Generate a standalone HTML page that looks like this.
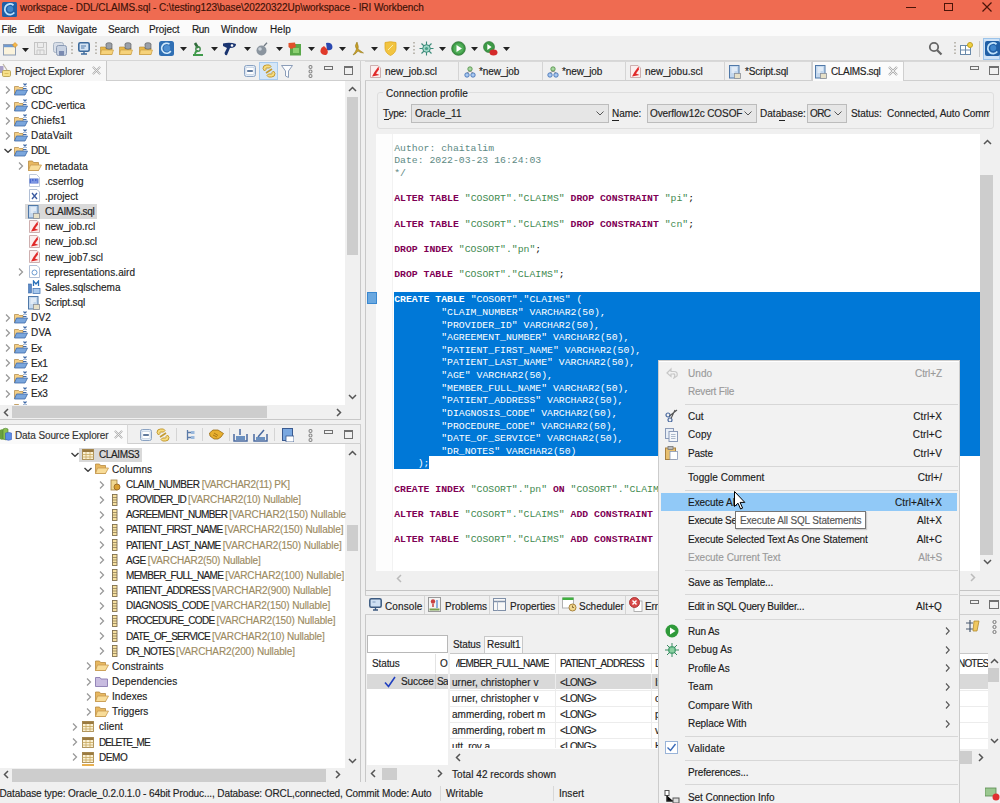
<!DOCTYPE html><html><head><meta charset="utf-8"><style>
*{margin:0;padding:0;box-sizing:border-box}
html,body{width:1000px;height:803px;overflow:hidden;background:#f0f0f0;position:relative;font-family:"Liberation Sans",sans-serif}
div,span,svg{position:absolute}
.t{font-size:10px;line-height:14px;color:#1a1a1a;white-space:pre;-webkit-text-stroke:0.15px currentColor}
.m{font-family:"Liberation Mono",monospace;font-size:9.8px;line-height:12px;white-space:pre;color:#000}
.g{color:#9a9a9a}
</style></head><body><div style="left:0px;top:0px;width:1000px;height:20px;background:#ef6b51"></div>
<svg style="left:2px;top:2px" width="15" height="15" viewBox="0 0 15 15"><rect x="0" y="0" width="15" height="15" rx="1.5" fill="#1f5fa6"/><path d="M11.5 3.2A5.3 5.3 0 1 0 12.3 10.5" fill="none" stroke="#bfe2fb" stroke-width="1.8"/><circle cx="8.2" cy="7" r="3" fill="#3f86cc"/></svg>
<span class="t" style="left:20px;top:0.50px;letter-spacing:-0.076px;color:#3b1208">workspace - DDL/CLAIMS.sql - C:\testing123\base\20220322Up\workspace - IRI Workbench</span>
<div style="left:906px;top:7px;width:10px;height:1px;background:#4a1408"></div>
<div style="left:944px;top:3px;width:9px;height:8px;border:1.3px solid #4a1408"></div>
<svg style="left:982px;top:2px" width="10" height="10" viewBox="0 0 10 10"><path d="M0.5 0.5L9.5 9.5M9.5 0.5L0.5 9.5" stroke="#4a1408" stroke-width="1.2"/></svg>
<div style="left:0px;top:20px;width:1000px;height:16px;background:#fbfbfb"></div>
<span class="t" style="left:1.5px;top:22.50px;letter-spacing:-0.232px;">File</span>
<span class="t" style="left:28px;top:22.50px;letter-spacing:-0.256px;">Edit</span>
<span class="t" style="left:57px;top:22.50px;letter-spacing:0.096px;">Navigate</span>
<span class="t" style="left:108px;top:22.50px;letter-spacing:-0.103px;">Search</span>
<span class="t" style="left:149px;top:22.50px;letter-spacing:-0.091px;">Project</span>
<span class="t" style="left:192px;top:22.50px;letter-spacing:-0.373px;">Run</span>
<span class="t" style="left:221px;top:22.50px;letter-spacing:0.092px;">Window</span>
<span class="t" style="left:270px;top:22.50px;letter-spacing:0.059px;">Help</span>
<div style="left:0px;top:36px;width:1000px;height:25px;background:#f0f0f0"></div>
<div style="left:0px;top:60px;width:1000px;height:1px;background:#d6d6d6"></div>
<svg style="left:3px;top:42px" width="15" height="14" viewBox="0 0 15 14"><rect x="0.5" y="2.5" width="12" height="10.5" fill="#fbf3dc" stroke="#8c9cb4"/><rect x="1" y="3" width="11" height="2.2" fill="#6f9ad0"/><path d="M12 0.5L14.5 3L12 5.5L9.5 3Z" fill="#f6b84a" stroke="#d08a20" stroke-width="0.6"/></svg>
<svg style="left:22px;top:47.5px" width="7" height="4"><path d="M0 0H7L3.5 4Z" fill="#222"/></svg>
<svg style="left:34px;top:42px" width="13" height="13" viewBox="0 0 13 13"><rect x="0.5" y="0.5" width="12" height="12" fill="#ececec" stroke="#c4c4c4"/><path d="M3.5 0.5V5.5H9.5V0.5M3 12.5V8H10V12.5M6 8V12.5" fill="none" stroke="#c8c8c8"/></svg>
<svg style="left:53px;top:42px" width="14" height="14" viewBox="0 0 14 14"><rect x="0.5" y="0.5" width="10" height="10" rx="2" fill="#d8dee8" stroke="#a8b4c4"/><rect x="3.5" y="3.5" width="10" height="10" rx="2" fill="#c8d2e2" stroke="#8a9ab4"/><rect x="6" y="9" width="5" height="4" fill="#7a8ab0"/></svg>
<svg style="left:71px;top:42px" width="2" height="14"><path d="M1 0V14" stroke="#9a9488" stroke-dasharray="1.5 2" stroke-width="1.2"/></svg>
<svg style="left:78px;top:42px" width="12" height="13" viewBox="0 0 12 13"><rect x="0.8" y="0.8" width="10.4" height="8.4" rx="1.5" fill="#d4e4f4" stroke="#3c6a9c" stroke-width="1.6"/><path d="M3 4H8M3 6H6.5" stroke="#3c6a9c" stroke-width="0.9"/><path d="M3 12H9M6 9.5V12" stroke="#3c6a9c" stroke-width="1.4"/></svg>
<svg style="left:95px;top:42px" width="2" height="14"><path d="M1 0V14" stroke="#9a9488" stroke-dasharray="1.5 2" stroke-width="1.2"/></svg>
<svg style="left:100px;top:42px" width="14" height="13" viewBox="0 0 14 13"><path d="M0.5 5H5L6 6H12V12.5H0.5Z" fill="#e8b84a" stroke="#b88a30" stroke-width="0.6"/><path d="M1.5 8H13.5L12 12.5H0.5Z" fill="#f6d27a" stroke="#c89a40" stroke-width="0.6"/><ellipse cx="9" cy="2" rx="3" ry="1.3" fill="#9aa0a8" stroke="#555" stroke-width="0.6"/><path d="M6 2V6.5Q9 8 12 6.5V2" fill="#9aa0a8" stroke="#555" stroke-width="0.6"/></svg>
<svg style="left:119px;top:42px" width="14" height="13" viewBox="0 0 14 13"><path d="M0.5 5H5L6 6H12V12.5H0.5Z" fill="#e8b84a" stroke="#b88a30" stroke-width="0.6"/><path d="M1.5 8H13.5L12 12.5H0.5Z" fill="#f6d27a" stroke="#c89a40" stroke-width="0.6"/><ellipse cx="9" cy="2" rx="3" ry="1.3" fill="#9aa0a8" stroke="#555" stroke-width="0.6"/><path d="M6 2V6.5Q9 8 12 6.5V2" fill="#9aa0a8" stroke="#555" stroke-width="0.6"/></svg>
<svg style="left:139px;top:42px" width="14" height="13" viewBox="0 0 14 13"><path d="M0.5 5H5L6 6H12V12.5H0.5Z" fill="#e8b84a" stroke="#b88a30" stroke-width="0.6"/><path d="M1.5 8H13.5L12 12.5H0.5Z" fill="#f6d27a" stroke="#c89a40" stroke-width="0.6"/><ellipse cx="9" cy="2" rx="3" ry="1.3" fill="#9aa0a8" stroke="#555" stroke-width="0.6"/><path d="M6 2V6.5Q9 8 12 6.5V2" fill="#9aa0a8" stroke="#555" stroke-width="0.6"/></svg>
<svg style="left:159px;top:41px" width="15" height="15" viewBox="0 0 15 15"><rect x="0" y="0" width="15" height="15" rx="2.5" fill="#2f6fb4"/><path d="M10.5 3.2A5 5 0 1 0 11.8 10" fill="none" stroke="#cfe8fb" stroke-width="1.6"/><circle cx="8" cy="7.2" r="3.2" fill="#4f8fd0"/></svg>
<svg style="left:180px;top:47px" width="7" height="4"><path d="M0 0H7L3.5 4Z" fill="#222"/></svg>
<svg style="left:192px;top:42px" width="12" height="14" viewBox="0 0 12 14"><path d="M3 1L6 6" stroke="#2f6a3a" stroke-width="2.6"/><circle cx="6" cy="7" r="2.2" fill="none" stroke="#3f8a4a" stroke-width="1.4"/><path d="M1 13H11M3 13Q3 9 6 9" fill="none" stroke="#3f9a4a" stroke-width="1.8"/></svg>
<svg style="left:211px;top:47px" width="7" height="4"><path d="M0 0H7L3.5 4Z" fill="#222"/></svg>
<svg style="left:222px;top:42px" width="15" height="14" viewBox="0 0 15 14"><path d="M1 1.5Q8 0 14 2Q14 6 8 6L5 13Q3 14 2.5 11L5 6L1 4Z" fill="#1a3470"/><circle cx="10" cy="3.5" r="1.3" fill="#fff"/></svg>
<svg style="left:243.5px;top:47px" width="7" height="4"><path d="M0 0H7L3.5 4Z" fill="#222"/></svg>
<svg style="left:256px;top:42px" width="13" height="14" viewBox="0 0 13 14"><circle cx="5.5" cy="8.5" r="5" fill="#8a949e"/><circle cx="4" cy="7" r="1.8" fill="#c8d0d8"/><path d="M8 4L11 0.8" stroke="#707a84" stroke-width="1.3"/></svg>
<svg style="left:275.5px;top:47px" width="7" height="4"><path d="M0 0H7L3.5 4Z" fill="#222"/></svg>
<svg style="left:288px;top:42px" width="14" height="14" viewBox="0 0 14 14"><rect x="2" y="2" width="11" height="11.5" fill="#5aa84a"/><rect x="5" y="6" width="6" height="5" fill="#8ad070"/><path d="M0.5 1L7 0.5L8 5L3 7L0.5 5Z" fill="#e0502a"/></svg>
<svg style="left:307.8px;top:47px" width="7" height="4"><path d="M0 0H7L3.5 4Z" fill="#222"/></svg>
<svg style="left:319px;top:42px" width="14" height="14" viewBox="0 0 14 14"><path d="M7 1Q13 0 13.5 5Q13 9 8 8Z" fill="#2a48b0"/><path d="M5 4Q1 6 1.5 10Q3 13.5 7 13Q10 11 8 7Z" fill="#e03a2a"/></svg>
<svg style="left:338.5px;top:47px" width="7" height="4"><path d="M0 0H7L3.5 4Z" fill="#222"/></svg>
<svg style="left:351px;top:41px" width="14" height="15" viewBox="0 0 14 15"><path d="M6 1Q8 6 7 8L12.5 12Q9 12 7 10Q5 13 2 14Q5 10 5.5 8Q3 5 6 1Z" fill="#c8a028" stroke="#8a7010" stroke-width="0.5"/></svg>
<svg style="left:371px;top:47px" width="7" height="4"><path d="M0 0H7L3.5 4Z" fill="#222"/></svg>
<svg style="left:384px;top:41px" width="13" height="15" viewBox="0 0 13 15"><path d="M1 1.5Q6.5 0 12 1.5V7Q12 12 6.5 14.5Q1 12 1 7Z" fill="#f2c440" stroke="#e0a820" stroke-width="0.8"/><path d="M4 9L9 4" stroke="#faf0b0" stroke-width="1"/></svg>
<svg style="left:403px;top:47px" width="7" height="4"><path d="M0 0H7L3.5 4Z" fill="#222"/></svg>
<svg style="left:413px;top:42px" width="2" height="14"><path d="M1 0V14" stroke="#9a9488" stroke-dasharray="1.5 2" stroke-width="1.2"/></svg>
<svg style="left:419px;top:41px" width="15" height="15" viewBox="0 0 15 15"><path d="M7.5 0.5V14.5M0.5 7.5H14.5M2.5 2.5L12.5 12.5M12.5 2.5L2.5 12.5" stroke="#3a8a78" stroke-width="1.1"/><circle cx="7.5" cy="7.5" r="3.8" fill="#a0d8c8" stroke="#3a8a78" stroke-width="1"/><circle cx="7.5" cy="7.5" r="1.6" fill="#4aa088"/></svg>
<svg style="left:439px;top:47px" width="7" height="4"><path d="M0 0H7L3.5 4Z" fill="#222"/></svg>
<svg style="left:451px;top:41px" width="15" height="15" viewBox="0 0 15 15"><circle cx="7.5" cy="7.5" r="6.8" fill="#3d9a46" stroke="#2a7030" stroke-width="0.8"/><circle cx="7.5" cy="7.5" r="5" fill="#52b05a"/><path d="M5.5 4L11 7.5L5.5 11Z" fill="#fff"/></svg>
<svg style="left:470.5px;top:47px" width="7" height="4"><path d="M0 0H7L3.5 4Z" fill="#222"/></svg>
<svg style="left:483px;top:41px" width="15" height="15" viewBox="0 0 15 15"><circle cx="6" cy="6" r="5.5" fill="#3d9a46" stroke="#2a7030" stroke-width="0.6"/><path d="M4.3 3L8.6 6L4.3 9Z" fill="#fff"/><ellipse cx="10.5" cy="11.5" rx="4" ry="3" fill="#d42a2a"/></svg>
<svg style="left:503px;top:47px" width="7" height="4"><path d="M0 0H7L3.5 4Z" fill="#222"/></svg>
<svg style="left:928px;top:41px" width="15" height="15" viewBox="0 0 15 15"><circle cx="6" cy="6" r="4.2" fill="none" stroke="#666" stroke-width="1.8"/><path d="M9 9L13.5 13.5" stroke="#666" stroke-width="2.2"/></svg>
<svg style="left:954px;top:42px" width="2" height="14"><path d="M1 0V14" stroke="#9a9488" stroke-dasharray="1.5 2" stroke-width="1.2"/></svg>
<svg style="left:960px;top:42px" width="13" height="13" viewBox="0 0 13 13"><rect x="0.5" y="3.5" width="10" height="9" fill="#fff" stroke="#6a8aaa"/><path d="M0.5 8H10.5M5.5 3.5V12.5" stroke="#6a8aaa"/><circle cx="10" cy="3" r="2.5" fill="#f0d040" stroke="#c0a020"/></svg>
<div style="left:979px;top:41px;width:1px;height:16px;background:#c8c8c8"></div>
<div style="left:983px;top:38px;width:17px;height:22px;background:#cfe3f7;border:1px solid #9cc4ea"></div>
<svg style="left:985px;top:41px" width="15" height="15" viewBox="0 0 15 15"><rect x="0" y="0" width="15" height="15" rx="2" fill="#1f5fa6"/><path d="M11.5 3.2A5.3 5.3 0 1 0 12.3 10.5" fill="none" stroke="#bfe2fb" stroke-width="1.8"/><circle cx="8.2" cy="7" r="3" fill="#3f86cc"/></svg>
<div style="left:0px;top:61px;width:361px;height:20px;background:#f0f0f0;border-bottom:1px solid #cfcfcf;border-right:1px solid #cfcfcf"></div>
<div style="left:0px;top:61px;width:107px;height:20px;background:#f7f7f7;border-right:1px solid #c8c8c8"></div>
<svg style="left:0px;top:63px" width="13" height="15" viewBox="0 0 13 15"><rect x="0" y="3" width="3.5" height="7" fill="#a8a0c8"/><path d="M3 1L7 7" stroke="#b8b0a0" stroke-width="1.2"/><rect x="2.5" y="7.5" width="8" height="6" rx="1.2" fill="#f6e08a" stroke="#b8a050" stroke-width="0.9"/><path d="M4.5 10.5H8.5" stroke="#d8b850" stroke-width="0.8"/></svg>
<span class="t" style="left:15px;top:64.80px;letter-spacing:-0.108px;color:#333">Project Explorer</span>
<svg style="left:92px;top:66px" width="9" height="9" viewBox="0 0 10 10"><path d="M1 1L9 9M9 1L1 9" stroke="#aaa" stroke-width="2.2"/><path d="M1 1L9 9M9 1L1 9" stroke="#fafafa" stroke-width="0.8"/></svg>
<svg style="left:244px;top:65px" width="12" height="12" viewBox="0 0 12 12"><rect x="0.5" y="0.5" width="11" height="11" rx="2" fill="#e4edf7" stroke="#8aa2c2"/><rect x="2" y="2.5" width="8" height="7" fill="#fff" stroke="#b8c8dc" stroke-width="0.6"/><path d="M3.2 6H8.8" stroke="#3a5a86" stroke-width="1.6"/></svg>
<div style="left:259px;top:62px;width:19px;height:18px;background:#d4e6f8;border:1px solid #a8cbee"></div>
<svg style="left:262px;top:64px" width="14" height="14" viewBox="0 0 14 14"><path d="M1 4.5Q1 1 4.5 1H7.5L9 2.5L7.5 4H4.5Q4 4 4 4.5V5.5L2.5 7Z" fill="#f6dc80" stroke="#c49a30" stroke-width="1"/><path d="M13 9.5Q13 13 9.5 13H6.5L5 11.5L6.5 10H9.5Q10 10 10 9.5V8.5L11.5 7Z" fill="#f6dc80" stroke="#c49a30" stroke-width="1"/><path d="M4 9L10 5" stroke="#c49a30" stroke-width="1.6"/></svg>
<svg style="left:281px;top:65px" width="12" height="13" viewBox="0 0 12 13"><path d="M0.5 0.5H11.5L7.5 6V12.5L4.5 11V6Z" fill="#fbfcfe" stroke="#8a9cb8" stroke-linejoin="round"/></svg>
<svg style="left:308px;top:64.5px" width="5" height="13" viewBox="0 0 5 13"><circle cx="2.5" cy="2" r="1.5" fill="none" stroke="#888" stroke-width="1.1"/><circle cx="2.5" cy="6.5" r="1.5" fill="none" stroke="#888" stroke-width="1.1"/><circle cx="2.5" cy="11" r="1.5" fill="none" stroke="#888" stroke-width="1.1"/></svg>
<div style="left:324px;top:65.5px;width:9px;height:4px;border:1px solid #707070"></div>
<div style="left:343.5px;top:65.5px;width:9.5px;height:9px;border:1px solid #707070;border-top:2px solid #707070"></div>
<div style="left:0px;top:81px;width:361px;height:339px;background:#fff;border-right:1px solid #c8c8c8;border-bottom:1px solid #c8c8c8"></div>
<div style="left:345px;top:81px;width:15px;height:324px;background:#f0f0f0"></div>
<svg style="left:348px;top:86px" width="9" height="6"><path d="M1 5L4.5 1.5L8 5" fill="none" stroke="#555" stroke-width="1.5"/></svg>
<div style="left:347px;top:97px;width:11px;height:158px;background:#cdcdcd"></div>
<svg style="left:348px;top:394px" width="9" height="6"><path d="M1 1L4.5 4.5L8 1" fill="none" stroke="#555" stroke-width="1.5"/></svg>
<div style="left:0px;top:405px;width:345px;height:14px;background:#f0f0f0"></div>
<div style="left:12px;top:405.5px;width:255px;height:12.5px;background:#cdcdcd"></div>
<svg style="left:3px;top:408px" width="6" height="9"><path d="M5 1L1.5 4.5L5 8" fill="none" stroke="#555" stroke-width="1.5"/></svg>
<svg style="left:336px;top:408px" width="6" height="9"><path d="M1 1L4.5 4.5L1 8" fill="none" stroke="#555" stroke-width="1.5"/></svg>
<div style="left:345px;top:405px;width:15px;height:14px;background:#f0f0f0"></div>
<svg style="left:5px;top:86.3px" width="6" height="8"><path d="M1 0.5L4.5 4L1 7.5" fill="none" stroke="#9a9a9a" stroke-width="1.3"/></svg>
<svg style="left:14px;top:83.3px" width="14" height="13" viewBox="0 0 14 13"><path d="M0.5 3.5H4.5L5.5 4.5H9V11.5H0.5Z" fill="#f4cf86" stroke="#b89050" stroke-width="0.8"/><path d="M2.5 7H13.5L11 12H0.5Z" fill="#7aa6dc" stroke="#3f6aa8" stroke-width="0.8"/><path d="M9.5 0.5L12.5 3.5M12.5 0.5L9.5 3.5" stroke="#3f6aa8" stroke-width="1.2"/><path d="M9 5.5H12.5" stroke="#3f6aa8" stroke-width="1"/></svg>
<span class="t" style="left:31px;top:83.80px;letter-spacing:-0.137px;color:#222">CDC</span>
<svg style="left:5px;top:101.5px" width="6" height="8"><path d="M1 0.5L4.5 4L1 7.5" fill="none" stroke="#9a9a9a" stroke-width="1.3"/></svg>
<svg style="left:14px;top:98.5px" width="14" height="13" viewBox="0 0 14 13"><path d="M0.5 3.5H4.5L5.5 4.5H9V11.5H0.5Z" fill="#f4cf86" stroke="#b89050" stroke-width="0.8"/><path d="M2.5 7H13.5L11 12H0.5Z" fill="#7aa6dc" stroke="#3f6aa8" stroke-width="0.8"/><path d="M9.5 0.5L12.5 3.5M12.5 0.5L9.5 3.5" stroke="#3f6aa8" stroke-width="1.2"/><path d="M9 5.5H12.5" stroke="#3f6aa8" stroke-width="1"/></svg>
<span class="t" style="left:31px;top:98.96px;letter-spacing:-0.030px;color:#222">CDC-vertica</span>
<svg style="left:5px;top:116.6px" width="6" height="8"><path d="M1 0.5L4.5 4L1 7.5" fill="none" stroke="#9a9a9a" stroke-width="1.3"/></svg>
<svg style="left:14px;top:113.6px" width="14" height="13" viewBox="0 0 14 13"><path d="M0.5 3.5H4.5L5.5 4.5H9V11.5H0.5Z" fill="#f4cf86" stroke="#b89050" stroke-width="0.8"/><path d="M2.5 7H13.5L11 12H0.5Z" fill="#7aa6dc" stroke="#3f6aa8" stroke-width="0.8"/><path d="M9.5 0.5L12.5 3.5M12.5 0.5L9.5 3.5" stroke="#3f6aa8" stroke-width="1.2"/><path d="M9 5.5H12.5" stroke="#3f6aa8" stroke-width="1"/></svg>
<span class="t" style="left:31px;top:114.12px;letter-spacing:0.145px;color:#222">Chiefs1</span>
<svg style="left:5px;top:131.8px" width="6" height="8"><path d="M1 0.5L4.5 4L1 7.5" fill="none" stroke="#9a9a9a" stroke-width="1.3"/></svg>
<svg style="left:14px;top:128.8px" width="14" height="13" viewBox="0 0 14 13"><path d="M0.5 3.5H4.5L5.5 4.5H9V11.5H0.5Z" fill="#f4cf86" stroke="#b89050" stroke-width="0.8"/><path d="M2.5 7H13.5L11 12H0.5Z" fill="#7aa6dc" stroke="#3f6aa8" stroke-width="0.8"/><path d="M9.5 0.5L12.5 3.5M12.5 0.5L9.5 3.5" stroke="#3f6aa8" stroke-width="1.2"/><path d="M9 5.5H12.5" stroke="#3f6aa8" stroke-width="1"/></svg>
<span class="t" style="left:31px;top:129.28px;letter-spacing:0.155px;color:#222">DataVailt</span>
<svg style="left:4px;top:148.4px" width="8" height="5"><path d="M0.5 1L4 4.3L7.5 1" fill="none" stroke="#404040" stroke-width="1.4"/></svg>
<svg style="left:14px;top:143.9px" width="14" height="13" viewBox="0 0 14 13"><path d="M0.5 3.5H4.5L5.5 4.5H9V11.5H0.5Z" fill="#f4cf86" stroke="#b89050" stroke-width="0.8"/><path d="M2.5 7H13.5L11 12H0.5Z" fill="#7aa6dc" stroke="#3f6aa8" stroke-width="0.8"/><path d="M9.5 0.5L12.5 3.5M12.5 0.5L9.5 3.5" stroke="#3f6aa8" stroke-width="1.2"/><path d="M9 5.5H12.5" stroke="#3f6aa8" stroke-width="1"/></svg>
<span class="t" style="left:31px;top:144.44px;letter-spacing:-0.458px;color:#222">DDL</span>
<svg style="left:18px;top:162.1px" width="6" height="8"><path d="M1 0.5L4.5 4L1 7.5" fill="none" stroke="#9a9a9a" stroke-width="1.3"/></svg>
<svg style="left:28px;top:160.1px" width="14" height="11" viewBox="0 0 14 11"><path d="M0.5 1H4.5L5.5 2.5H10.5V10.5H0.5Z" fill="#e8b860" stroke="#b88a40" stroke-width="0.8"/><path d="M2.5 5H13.5L10.5 10.5H0.5Z" fill="#f8dc98" stroke="#c89a50" stroke-width="0.8"/></svg>
<span class="t" style="left:45px;top:159.60px;letter-spacing:0.146px;color:#222">metadata</span>
<svg style="left:29px;top:174.3px" width="11" height="13" viewBox="0 0 11 13"><path d="M0.5 0.5H7.5L10.5 3.5V12.5H0.5Z" fill="#fff" stroke="#b8c4d8" stroke-width="0.9"/><rect x="0.5" y="4.5" width="9" height="5" fill="#4a6ad0"/><path d="M2 6H3M4.5 6H6M7.5 6H8.5M2 8H8.5" stroke="#c8d8ff" stroke-width="0.8"/></svg>
<span class="t" style="left:45px;top:174.76px;letter-spacing:0.041px;color:#222">.cserrlog</span>
<svg style="left:29px;top:189.4px" width="11" height="13" viewBox="0 0 11 13"><path d="M0.5 0.5H8L10.5 3V12.5H0.5Z" fill="#fff" stroke="#a8b8d0" stroke-width="0.9"/><path d="M3 4L8 10M8 4L3 10" stroke="#3a5aa0" stroke-width="1.3"/></svg>
<span class="t" style="left:45px;top:189.92px;letter-spacing:0.027px;color:#222">.project</span>
<div style="left:25px;top:204.07999999999998px;width:72px;height:15px;background:#d9d9d9"></div>
<svg style="left:28px;top:204.6px" width="12" height="14" viewBox="0 0 12 14"><rect x="0.5" y="0.5" width="9.5" height="12.5" fill="#c4d8ee" stroke="#4f78a8" stroke-width="1"/><path d="M2.5 3H8M2.5 5H8M2.5 7H5.5" stroke="#ffffff" stroke-width="1"/><rect x="5.5" y="8.5" width="6" height="5" fill="#e6e0c8" stroke="#8a9098" stroke-width="0.8"/></svg>
<span class="t" style="left:45px;top:205.08px;letter-spacing:-0.349px;color:#222">CLAIMS.sql</span>
<svg style="left:29px;top:219.7px" width="11" height="13" viewBox="0 0 11 13"><path d="M0.5 0.5H8L10.5 3V12.5H0.5Z" fill="#fbeeee" stroke="#c8a8a8" stroke-width="0.9"/><path d="M2 11.5L4.5 7L8.5 1.5L9 4.5L6 8.5L9.5 10Z" fill="#e02828"/></svg>
<span class="t" style="left:45px;top:220.24px;letter-spacing:-0.033px;color:#222">new_job.rcl</span>
<svg style="left:29px;top:234.9px" width="11" height="13" viewBox="0 0 11 13"><path d="M0.5 0.5H8L10.5 3V12.5H0.5Z" fill="#fbeeee" stroke="#c8a8a8" stroke-width="0.9"/><path d="M2 11.5L4.5 7L8.5 1.5L9 4.5L6 8.5L9.5 10Z" fill="#e02828"/></svg>
<span class="t" style="left:45px;top:235.40px;letter-spacing:-0.029px;color:#222">new_job.scl</span>
<svg style="left:29px;top:250.1px" width="11" height="13" viewBox="0 0 11 13"><path d="M0.5 0.5H8L10.5 3V12.5H0.5Z" fill="#fbeeee" stroke="#c8a8a8" stroke-width="0.9"/><path d="M2 11.5L4.5 7L8.5 1.5L9 4.5L6 8.5L9.5 10Z" fill="#e02828"/></svg>
<span class="t" style="left:45px;top:250.56px;letter-spacing:0.020px;color:#222">new_job7.scl</span>
<svg style="left:18px;top:268.2px" width="6" height="8"><path d="M1 0.5L4.5 4L1 7.5" fill="none" stroke="#9a9a9a" stroke-width="1.3"/></svg>
<svg style="left:29px;top:265.2px" width="11" height="13" viewBox="0 0 11 13"><path d="M0.5 0.5H8L10.5 3V12.5H0.5Z" fill="#fff" stroke="#a8b8d0" stroke-width="0.9"/><circle cx="5.5" cy="7.5" r="2.5" fill="none" stroke="#6a9ad0" stroke-width="1"/></svg>
<span class="t" style="left:45px;top:265.72px;letter-spacing:0.089px;color:#222">representations.aird</span>
<svg style="left:28px;top:280.4px" width="13" height="14" viewBox="0 0 13 14"><rect x="0.5" y="4" width="3" height="9" fill="#5a8ac8" stroke="#3a6aa8" stroke-width="0.6"/><path d="M5.5 6V1L8 4L10.5 1V6" stroke="#2a70b8" stroke-width="1.3" fill="none"/><rect x="5" y="8.5" width="7" height="5" fill="#a8c8ec" stroke="#4a7ab8" stroke-width="0.8"/></svg>
<span class="t" style="left:45px;top:280.88px;letter-spacing:-0.006px;color:#222">Sales.sqlschema</span>
<svg style="left:28px;top:295.5px" width="12" height="14" viewBox="0 0 12 14"><rect x="0.5" y="0.5" width="9.5" height="12.5" fill="#c4d8ee" stroke="#4f78a8" stroke-width="1"/><path d="M2.5 3H8M2.5 5H8M2.5 7H5.5" stroke="#ffffff" stroke-width="1"/><rect x="5.5" y="8.5" width="6" height="5" fill="#e6e0c8" stroke="#8a9098" stroke-width="0.8"/></svg>
<span class="t" style="left:45px;top:296.04px;letter-spacing:-0.106px;color:#222">Script.sql</span>
<svg style="left:5px;top:313.7px" width="6" height="8"><path d="M1 0.5L4.5 4L1 7.5" fill="none" stroke="#9a9a9a" stroke-width="1.3"/></svg>
<svg style="left:14px;top:310.7px" width="14" height="13" viewBox="0 0 14 13"><path d="M0.5 3.5H4.5L5.5 4.5H9V11.5H0.5Z" fill="#f4cf86" stroke="#b89050" stroke-width="0.8"/><path d="M2.5 7H13.5L11 12H0.5Z" fill="#7aa6dc" stroke="#3f6aa8" stroke-width="0.8"/><path d="M9.5 0.5L12.5 3.5M12.5 0.5L9.5 3.5" stroke="#3f6aa8" stroke-width="1.2"/><path d="M9 5.5H12.5" stroke="#3f6aa8" stroke-width="1"/></svg>
<span class="t" style="left:31px;top:311.20px;letter-spacing:0.157px;color:#222">DV2</span>
<svg style="left:5px;top:328.9px" width="6" height="8"><path d="M1 0.5L4.5 4L1 7.5" fill="none" stroke="#9a9a9a" stroke-width="1.3"/></svg>
<svg style="left:14px;top:325.9px" width="14" height="13" viewBox="0 0 14 13"><path d="M0.5 3.5H4.5L5.5 4.5H9V11.5H0.5Z" fill="#f4cf86" stroke="#b89050" stroke-width="0.8"/><path d="M2.5 7H13.5L11 12H0.5Z" fill="#7aa6dc" stroke="#3f6aa8" stroke-width="0.8"/><path d="M9.5 0.5L12.5 3.5M12.5 0.5L9.5 3.5" stroke="#3f6aa8" stroke-width="1.2"/><path d="M9 5.5H12.5" stroke="#3f6aa8" stroke-width="1"/></svg>
<span class="t" style="left:31px;top:326.36px;letter-spacing:0.233px;color:#222">DVA</span>
<svg style="left:5px;top:344.0px" width="6" height="8"><path d="M1 0.5L4.5 4L1 7.5" fill="none" stroke="#9a9a9a" stroke-width="1.3"/></svg>
<svg style="left:14px;top:341.0px" width="14" height="13" viewBox="0 0 14 13"><path d="M0.5 3.5H4.5L5.5 4.5H9V11.5H0.5Z" fill="#f4cf86" stroke="#b89050" stroke-width="0.8"/><path d="M2.5 7H13.5L11 12H0.5Z" fill="#7aa6dc" stroke="#3f6aa8" stroke-width="0.8"/><path d="M9.5 0.5L12.5 3.5M12.5 0.5L9.5 3.5" stroke="#3f6aa8" stroke-width="1.2"/><path d="M9 5.5H12.5" stroke="#3f6aa8" stroke-width="1"/></svg>
<span class="t" style="left:31px;top:341.52px;letter-spacing:-0.590px;color:#222">Ex</span>
<svg style="left:5px;top:359.2px" width="6" height="8"><path d="M1 0.5L4.5 4L1 7.5" fill="none" stroke="#9a9a9a" stroke-width="1.3"/></svg>
<svg style="left:14px;top:356.2px" width="14" height="13" viewBox="0 0 14 13"><path d="M0.5 3.5H4.5L5.5 4.5H9V11.5H0.5Z" fill="#f4cf86" stroke="#b89050" stroke-width="0.8"/><path d="M2.5 7H13.5L11 12H0.5Z" fill="#7aa6dc" stroke="#3f6aa8" stroke-width="0.8"/><path d="M9.5 0.5L12.5 3.5M12.5 0.5L9.5 3.5" stroke="#3f6aa8" stroke-width="1.2"/><path d="M9 5.5H12.5" stroke="#3f6aa8" stroke-width="1"/></svg>
<span class="t" style="left:31px;top:356.68px;letter-spacing:-0.206px;color:#222">Ex1</span>
<svg style="left:5px;top:374.3px" width="6" height="8"><path d="M1 0.5L4.5 4L1 7.5" fill="none" stroke="#9a9a9a" stroke-width="1.3"/></svg>
<svg style="left:14px;top:371.3px" width="14" height="13" viewBox="0 0 14 13"><path d="M0.5 3.5H4.5L5.5 4.5H9V11.5H0.5Z" fill="#f4cf86" stroke="#b89050" stroke-width="0.8"/><path d="M2.5 7H13.5L11 12H0.5Z" fill="#7aa6dc" stroke="#3f6aa8" stroke-width="0.8"/><path d="M9.5 0.5L12.5 3.5M12.5 0.5L9.5 3.5" stroke="#3f6aa8" stroke-width="1.2"/><path d="M9 5.5H12.5" stroke="#3f6aa8" stroke-width="1"/></svg>
<span class="t" style="left:31px;top:371.84px;letter-spacing:-0.206px;color:#222">Ex2</span>
<svg style="left:5px;top:389.5px" width="6" height="8"><path d="M1 0.5L4.5 4L1 7.5" fill="none" stroke="#9a9a9a" stroke-width="1.3"/></svg>
<svg style="left:14px;top:386.5px" width="14" height="13" viewBox="0 0 14 13"><path d="M0.5 3.5H4.5L5.5 4.5H9V11.5H0.5Z" fill="#f4cf86" stroke="#b89050" stroke-width="0.8"/><path d="M2.5 7H13.5L11 12H0.5Z" fill="#7aa6dc" stroke="#3f6aa8" stroke-width="0.8"/><path d="M9.5 0.5L12.5 3.5M12.5 0.5L9.5 3.5" stroke="#3f6aa8" stroke-width="1.2"/><path d="M9 5.5H12.5" stroke="#3f6aa8" stroke-width="1"/></svg>
<span class="t" style="left:31px;top:387.00px;letter-spacing:-0.206px;color:#222">Ex3</span>
<div style="left:14px;top:401px;width:14px;height:4px;overflow:hidden"><svg style="left:0;top:0" width="14" height="13" viewBox="0 0 14 13"><path d="M9.5 0.5L12.5 3.5M12.5 0.5L9.5 3.5" stroke="#3f6aa8" stroke-width="1.2"/><path d="M0.5 3.5H4.5L5.5 4.5H9V11.5H0.5Z" fill="#f4cf86" stroke="#b89050" stroke-width="0.8"/></svg></div>
<div style="left:0px;top:424px;width:361px;height:20px;background:#f0f0f0;border-top:1px solid #cfcfcf;border-bottom:1px solid #cfcfcf;border-right:1px solid #cfcfcf"></div>
<div style="left:0px;top:424px;width:128px;height:20px;background:#fafafa;border-right:1px solid #d8d8d8;border-top:1px solid #cfcfcf"></div>
<svg style="left:0px;top:427px" width="13" height="14" viewBox="0 0 13 14"><path d="M0 3Q2 1.5 4 3V12Q2 13.5 0 12Z" fill="#6aa040"/><path d="M3 2Q5.5 0.5 8 2V12Q5.5 13.5 3 12Z" fill="#8ac050" stroke="#4a8030" stroke-width="0.6"/><path d="M5.5 6Q8.5 4.8 11.5 6V12.5Q8.5 14 5.5 12.5Z" fill="#5a8ee8" stroke="#3a5ab8" stroke-width="0.6"/></svg>
<span class="t" style="left:15px;top:428.80px;letter-spacing:-0.104px;color:#333">Data Source Explorer</span>
<svg style="left:113.5px;top:430px" width="9" height="9" viewBox="0 0 10 10"><path d="M1 1L9 9M9 1L1 9" stroke="#aaa" stroke-width="2.2"/><path d="M1 1L9 9M9 1L1 9" stroke="#fafafa" stroke-width="0.8"/></svg>
<svg style="left:139.5px;top:428.5px" width="12" height="12" viewBox="0 0 12 12"><rect x="0.5" y="0.5" width="11" height="11" rx="2" fill="#e4edf7" stroke="#8aa2c2"/><rect x="2" y="2.5" width="8" height="7" fill="#fff" stroke="#b8c8dc" stroke-width="0.6"/><path d="M3.2 6H8.8" stroke="#3a5a86" stroke-width="1.6"/></svg>
<svg style="left:156px;top:428px" width="14" height="14" viewBox="0 0 14 14"><path d="M1 4.5Q1 1 4.5 1H7.5L9 2.5L7.5 4H4.5Q4 4 4 4.5V5.5L2.5 7Z" fill="#f6dc80" stroke="#c49a30" stroke-width="1"/><path d="M13 9.5Q13 13 9.5 13H6.5L5 11.5L6.5 10H9.5Q10 10 10 9.5V8.5L11.5 7Z" fill="#f6dc80" stroke="#c49a30" stroke-width="1"/><path d="M4 9L10 5" stroke="#c49a30" stroke-width="1.6"/></svg>
<div style="left:175.5px;top:428px;width:1px;height:13px;background:#d4d4d4"></div>
<svg style="left:186px;top:429px" width="9" height="12" viewBox="0 0 9 12"><path d="M1.5 1V11M1.5 3.5H8M1.5 8.5H8" stroke="#5a7aa8" stroke-width="1.3"/><rect x="5" y="2" width="3.5" height="3" fill="#9ab8dc"/><rect x="5" y="7" width="3.5" height="3" fill="#9ab8dc"/></svg>
<div style="left:201.5px;top:428px;width:1px;height:13px;background:#d4d4d4"></div>
<svg style="left:209px;top:429px" width="15" height="11" viewBox="0 0 15 11"><path d="M0.5 4L4 1H9L14.5 4.5L12 8L9 10H5L1 7Z" fill="#e8b030" stroke="#9a6a10" stroke-width="0.8"/><path d="M5 4L9 6.5M4 6L8 8" stroke="#9a6a10" stroke-width="0.8"/></svg>
<div style="left:228.5px;top:428px;width:1px;height:13px;background:#d4d4d4"></div>
<svg style="left:233px;top:428px" width="15" height="14" viewBox="0 0 15 14"><path d="M1 6V13H14V6" fill="none" stroke="#4a6aa0" stroke-width="1.5"/><rect x="3" y="8" width="9" height="4" fill="#6a90c0"/><path d="M7 1V7" stroke="#4a6aa0" stroke-width="1.5"/></svg>
<svg style="left:253px;top:427px" width="15" height="15" viewBox="0 0 15 15"><path d="M1 7V14H14V7" fill="none" stroke="#4a6aa0" stroke-width="1.5"/><rect x="3" y="10" width="9" height="3" fill="#6a90c0"/><path d="M5 10L11 3" stroke="#4a6aa0" stroke-width="1.5"/></svg>
<div style="left:273.5px;top:428px;width:1px;height:13px;background:#d4d4d4"></div>
<svg style="left:282px;top:428px" width="12" height="14" viewBox="0 0 12 14"><rect x="0.5" y="0.5" width="10" height="12" fill="#7aa8e0" stroke="#3a5a90"/><rect x="4" y="8" width="8" height="6" fill="#fff" stroke="#3a5a90" stroke-width="0.8"/></svg>
<svg style="left:308px;top:428.5px" width="5" height="13" viewBox="0 0 5 13"><circle cx="2.5" cy="2" r="1.5" fill="none" stroke="#888" stroke-width="1.1"/><circle cx="2.5" cy="6.5" r="1.5" fill="none" stroke="#888" stroke-width="1.1"/><circle cx="2.5" cy="11" r="1.5" fill="none" stroke="#888" stroke-width="1.1"/></svg>
<div style="left:324px;top:429.5px;width:9px;height:4px;border:1px solid #707070"></div>
<div style="left:343.5px;top:429.5px;width:9.5px;height:9px;border:1px solid #707070;border-top:2px solid #707070"></div>
<div style="left:0px;top:444px;width:361px;height:341px;background:#fff;border-right:1px solid #c8c8c8"></div>
<div style="left:345px;top:444px;width:15px;height:322px;background:#f0f0f0"></div>
<svg style="left:348px;top:450px" width="9" height="6"><path d="M1 5L4.5 1.5L8 5" fill="none" stroke="#555" stroke-width="1.5"/></svg>
<div style="left:347px;top:525px;width:11px;height:26px;background:#cdcdcd"></div>
<svg style="left:348px;top:758px" width="9" height="6"><path d="M1 1L4.5 4.5L8 1" fill="none" stroke="#555" stroke-width="1.5"/></svg>
<div style="left:0px;top:768px;width:345px;height:15px;background:#f0f0f0"></div>
<div style="left:12px;top:769px;width:314px;height:12.5px;background:#cdcdcd"></div>
<svg style="left:3px;top:770px" width="6" height="9"><path d="M5 1L1.5 4.5L5 8" fill="none" stroke="#555" stroke-width="1.5"/></svg>
<svg style="left:335px;top:770px" width="6" height="9"><path d="M1 1L4.5 4.5L1 8" fill="none" stroke="#555" stroke-width="1.5"/></svg>
<div style="left:345px;top:766px;width:15px;height:16px;background:#f0f0f0"></div>
<div style="left:79px;top:447.7px;width:63px;height:14px;background:#d9d9d9"></div>
<svg style="left:71px;top:451.7px" width="8" height="5"><path d="M0.5 1L4 4.3L7.5 1" fill="none" stroke="#404040" stroke-width="1.4"/></svg>
<svg style="left:82px;top:448.7px" width="12" height="11" viewBox="0 0 12 11"><rect x="0.5" y="0.5" width="11" height="10" fill="#fbf1d4" stroke="#a88a50" stroke-width="0.9"/><rect x="0.5" y="0.5" width="11" height="2.5" fill="#9a7a40"/><path d="M0.5 5.5H11.5M0.5 8H11.5M4 3V10.5M8 3V10.5" stroke="#c8a860" stroke-width="0.8"/></svg>
<span class="t" style="left:99px;top:447.70px;letter-spacing:-0.380px;color:#222">CLAIMS3</span>
<svg style="left:84px;top:466.8px" width="8" height="5"><path d="M0.5 1L4 4.3L7.5 1" fill="none" stroke="#404040" stroke-width="1.4"/></svg>
<svg style="left:95px;top:463.3px" width="14" height="11" viewBox="0 0 14 11"><path d="M0.5 1H4.5L5.5 2.5H10.5V10.5H0.5Z" fill="#e8b860" stroke="#b88a40" stroke-width="0.8"/><path d="M2.5 5H13.5L10.5 10.5H0.5Z" fill="#f8dc98" stroke="#c89a50" stroke-width="0.8"/></svg>
<span class="t" style="left:112px;top:462.85px;letter-spacing:0.109px;color:#222">Columns</span>
<svg style="left:98.5px;top:480.5px" width="6" height="8"><path d="M1 0.5L4.5 4L1 7.5" fill="none" stroke="#9a9a9a" stroke-width="1.3"/></svg>
<svg style="left:109px;top:478.5px" width="12" height="12" viewBox="0 0 12 12"><rect x="2" y="1" width="6" height="10" fill="#f0d890" stroke="#a08040" stroke-width="0.8"/><circle cx="8" cy="8" r="3" fill="#d8a030" stroke="#906020" stroke-width="0.8"/></svg>
<span class="t" style="left:126px;top:478.00px;color:#222;letter-spacing:-0.506px">CLAIM_NUMBER <span style="position:static;color:#9c8b62;letter-spacing:-0.262px">[VARCHAR2(11) PK]</span></span>
<svg style="left:98.5px;top:495.6px" width="6" height="8"><path d="M1 0.5L4.5 4L1 7.5" fill="none" stroke="#9a9a9a" stroke-width="1.3"/></svg>
<svg style="left:111px;top:493.6px" width="8" height="12" viewBox="0 0 8 12"><rect x="1.5" y="0.5" width="4.5" height="11" fill="#f6e0a0" stroke="#807050" stroke-width="0.9"/><path d="M1.5 3.5H6M1.5 6H6M1.5 8.5H6" stroke="#807050" stroke-width="0.7"/></svg>
<span class="t" style="left:126px;top:493.15px;color:#222;letter-spacing:-0.710px">PROVIDER_ID <span style="position:static;color:#9c8b62;letter-spacing:-0.141px">[VARCHAR2(10) Nullable]</span></span>
<svg style="left:98.5px;top:510.8px" width="6" height="8"><path d="M1 0.5L4.5 4L1 7.5" fill="none" stroke="#9a9a9a" stroke-width="1.3"/></svg>
<svg style="left:111px;top:508.8px" width="8" height="12" viewBox="0 0 8 12"><rect x="1.5" y="0.5" width="4.5" height="11" fill="#f6e0a0" stroke="#807050" stroke-width="0.9"/><path d="M1.5 3.5H6M1.5 6H6M1.5 8.5H6" stroke="#807050" stroke-width="0.7"/></svg>
<span class="t" style="left:126px;top:508.30px;color:#222;letter-spacing:-0.687px">AGREEMENT_NUMBER <span style="position:static;color:#9c8b62;letter-spacing:-0.090px">[VARCHAR2(150) Nullable</span></span>
<svg style="left:98.5px;top:526.0px" width="6" height="8"><path d="M1 0.5L4.5 4L1 7.5" fill="none" stroke="#9a9a9a" stroke-width="1.3"/></svg>
<svg style="left:111px;top:524.0px" width="8" height="12" viewBox="0 0 8 12"><rect x="1.5" y="0.5" width="4.5" height="11" fill="#f6e0a0" stroke="#807050" stroke-width="0.9"/><path d="M1.5 3.5H6M1.5 6H6M1.5 8.5H6" stroke="#807050" stroke-width="0.7"/></svg>
<span class="t" style="left:126px;top:523.45px;color:#222;letter-spacing:-0.735px">PATIENT_FIRST_NAME <span style="position:static;color:#9c8b62;letter-spacing:-0.112px">[VARCHAR2(150) Nullable]</span></span>
<svg style="left:98.5px;top:541.1px" width="6" height="8"><path d="M1 0.5L4.5 4L1 7.5" fill="none" stroke="#9a9a9a" stroke-width="1.3"/></svg>
<svg style="left:111px;top:539.1px" width="8" height="12" viewBox="0 0 8 12"><rect x="1.5" y="0.5" width="4.5" height="11" fill="#f6e0a0" stroke="#807050" stroke-width="0.9"/><path d="M1.5 3.5H6M1.5 6H6M1.5 8.5H6" stroke="#807050" stroke-width="0.7"/></svg>
<span class="t" style="left:126px;top:538.60px;color:#222;letter-spacing:-0.658px">PATIENT_LAST_NAME <span style="position:static;color:#9c8b62;letter-spacing:-0.112px">[VARCHAR2(150) Nullable]</span></span>
<svg style="left:98.5px;top:556.2px" width="6" height="8"><path d="M1 0.5L4.5 4L1 7.5" fill="none" stroke="#9a9a9a" stroke-width="1.3"/></svg>
<svg style="left:111px;top:554.2px" width="8" height="12" viewBox="0 0 8 12"><rect x="1.5" y="0.5" width="4.5" height="11" fill="#f6e0a0" stroke="#807050" stroke-width="0.9"/><path d="M1.5 3.5H6M1.5 6H6M1.5 8.5H6" stroke="#807050" stroke-width="0.7"/></svg>
<span class="t" style="left:126px;top:553.75px;color:#222;letter-spacing:-0.511px">AGE <span style="position:static;color:#9c8b62;letter-spacing:-0.141px">[VARCHAR2(50) Nullable]</span></span>
<svg style="left:98.5px;top:571.4px" width="6" height="8"><path d="M1 0.5L4.5 4L1 7.5" fill="none" stroke="#9a9a9a" stroke-width="1.3"/></svg>
<svg style="left:111px;top:569.4px" width="8" height="12" viewBox="0 0 8 12"><rect x="1.5" y="0.5" width="4.5" height="11" fill="#f6e0a0" stroke="#807050" stroke-width="0.9"/><path d="M1.5 3.5H6M1.5 6H6M1.5 8.5H6" stroke="#807050" stroke-width="0.7"/></svg>
<span class="t" style="left:126px;top:568.90px;color:#222;letter-spacing:-0.702px">MEMBER_FULL_NAME <span style="position:static;color:#9c8b62;letter-spacing:-0.112px">[VARCHAR2(100) Nullable]</span></span>
<svg style="left:98.5px;top:586.5px" width="6" height="8"><path d="M1 0.5L4.5 4L1 7.5" fill="none" stroke="#9a9a9a" stroke-width="1.3"/></svg>
<svg style="left:111px;top:584.5px" width="8" height="12" viewBox="0 0 8 12"><rect x="1.5" y="0.5" width="4.5" height="11" fill="#f6e0a0" stroke="#807050" stroke-width="0.9"/><path d="M1.5 3.5H6M1.5 6H6M1.5 8.5H6" stroke="#807050" stroke-width="0.7"/></svg>
<span class="t" style="left:126px;top:584.05px;color:#222;letter-spacing:-0.711px">PATIENT_ADDRESS <span style="position:static;color:#9c8b62;letter-spacing:-0.112px">[VARCHAR2(900) Nullable]</span></span>
<svg style="left:98.5px;top:601.7px" width="6" height="8"><path d="M1 0.5L4.5 4L1 7.5" fill="none" stroke="#9a9a9a" stroke-width="1.3"/></svg>
<svg style="left:111px;top:599.7px" width="8" height="12" viewBox="0 0 8 12"><rect x="1.5" y="0.5" width="4.5" height="11" fill="#f6e0a0" stroke="#807050" stroke-width="0.9"/><path d="M1.5 3.5H6M1.5 6H6M1.5 8.5H6" stroke="#807050" stroke-width="0.7"/></svg>
<span class="t" style="left:126px;top:599.20px;color:#222;letter-spacing:-0.504px">DIAGNOSIS_CODE <span style="position:static;color:#9c8b62;letter-spacing:-0.112px">[VARCHAR2(150) Nullable]</span></span>
<svg style="left:98.5px;top:616.9px" width="6" height="8"><path d="M1 0.5L4.5 4L1 7.5" fill="none" stroke="#9a9a9a" stroke-width="1.3"/></svg>
<svg style="left:111px;top:614.9px" width="8" height="12" viewBox="0 0 8 12"><rect x="1.5" y="0.5" width="4.5" height="11" fill="#f6e0a0" stroke="#807050" stroke-width="0.9"/><path d="M1.5 3.5H6M1.5 6H6M1.5 8.5H6" stroke="#807050" stroke-width="0.7"/></svg>
<span class="t" style="left:126px;top:614.35px;color:#222;letter-spacing:-0.711px">PROCEDURE_CODE <span style="position:static;color:#9c8b62;letter-spacing:-0.112px">[VARCHAR2(150) Nullable]</span></span>
<svg style="left:98.5px;top:632.0px" width="6" height="8"><path d="M1 0.5L4.5 4L1 7.5" fill="none" stroke="#9a9a9a" stroke-width="1.3"/></svg>
<svg style="left:111px;top:630.0px" width="8" height="12" viewBox="0 0 8 12"><rect x="1.5" y="0.5" width="4.5" height="11" fill="#f6e0a0" stroke="#807050" stroke-width="0.9"/><path d="M1.5 3.5H6M1.5 6H6M1.5 8.5H6" stroke="#807050" stroke-width="0.7"/></svg>
<span class="t" style="left:126px;top:629.50px;color:#222;letter-spacing:-0.722px">DATE_OF_SERVICE <span style="position:static;color:#9c8b62;letter-spacing:-0.141px">[VARCHAR2(10) Nullable]</span></span>
<svg style="left:98.5px;top:647.1px" width="6" height="8"><path d="M1 0.5L4.5 4L1 7.5" fill="none" stroke="#9a9a9a" stroke-width="1.3"/></svg>
<svg style="left:111px;top:645.1px" width="8" height="12" viewBox="0 0 8 12"><rect x="1.5" y="0.5" width="4.5" height="11" fill="#f6e0a0" stroke="#807050" stroke-width="0.9"/><path d="M1.5 3.5H6M1.5 6H6M1.5 8.5H6" stroke="#807050" stroke-width="0.7"/></svg>
<span class="t" style="left:126px;top:644.65px;color:#222;letter-spacing:-0.805px">DR_NOTES <span style="position:static;color:#9c8b62;letter-spacing:-0.112px">[VARCHAR2(200) Nullable]</span></span>
<svg style="left:85.5px;top:662.3px" width="6" height="8"><path d="M1 0.5L4.5 4L1 7.5" fill="none" stroke="#9a9a9a" stroke-width="1.3"/></svg>
<svg style="left:95px;top:660.3px" width="14" height="11" viewBox="0 0 14 11"><path d="M0.5 1H4.5L5.5 2.5H10.5V10.5H0.5Z" fill="#e8b860" stroke="#b88a40" stroke-width="0.8"/><path d="M2.5 5H13.5L10.5 10.5H0.5Z" fill="#f8dc98" stroke="#c89a50" stroke-width="0.8"/></svg>
<span class="t" style="left:112px;top:659.80px;letter-spacing:0.098px;color:#222">Constraints</span>
<svg style="left:85.5px;top:677.5px" width="6" height="8"><path d="M1 0.5L4.5 4L1 7.5" fill="none" stroke="#9a9a9a" stroke-width="1.3"/></svg>
<svg style="left:95px;top:675.5px" width="13" height="11" viewBox="0 0 13 11"><path d="M0.5 1.5H5L6 3H12.5V10.5H0.5Z" fill="#c8bce0" stroke="#8a7ab0" stroke-width="0.9"/></svg>
<span class="t" style="left:112px;top:674.95px;letter-spacing:0.121px;color:#222">Dependencies</span>
<svg style="left:85.5px;top:692.6px" width="6" height="8"><path d="M1 0.5L4.5 4L1 7.5" fill="none" stroke="#9a9a9a" stroke-width="1.3"/></svg>
<svg style="left:95px;top:690.6px" width="14" height="11" viewBox="0 0 14 11"><path d="M0.5 1H4.5L5.5 2.5H10.5V10.5H0.5Z" fill="#e8b860" stroke="#b88a40" stroke-width="0.8"/><path d="M2.5 5H13.5L10.5 10.5H0.5Z" fill="#f8dc98" stroke="#c89a50" stroke-width="0.8"/></svg>
<span class="t" style="left:112px;top:690.10px;letter-spacing:0.050px;color:#222">Indexes</span>
<svg style="left:85.5px;top:707.8px" width="6" height="8"><path d="M1 0.5L4.5 4L1 7.5" fill="none" stroke="#9a9a9a" stroke-width="1.3"/></svg>
<svg style="left:95px;top:705.8px" width="14" height="11" viewBox="0 0 14 11"><path d="M0.5 1H4.5L5.5 2.5H10.5V10.5H0.5Z" fill="#e8b860" stroke="#b88a40" stroke-width="0.8"/><path d="M2.5 5H13.5L10.5 10.5H0.5Z" fill="#f8dc98" stroke="#c89a50" stroke-width="0.8"/></svg>
<span class="t" style="left:112px;top:705.25px;letter-spacing:0.002px;color:#222">Triggers</span>
<svg style="left:72px;top:722.9px" width="6" height="8"><path d="M1 0.5L4.5 4L1 7.5" fill="none" stroke="#9a9a9a" stroke-width="1.3"/></svg>
<svg style="left:82px;top:721.4px" width="12" height="11" viewBox="0 0 12 11"><rect x="0.5" y="0.5" width="11" height="10" fill="#fbf1d4" stroke="#a88a50" stroke-width="0.9"/><rect x="0.5" y="0.5" width="11" height="2.5" fill="#9a7a40"/><path d="M0.5 5.5H11.5M0.5 8H11.5M4 3V10.5M8 3V10.5" stroke="#c8a860" stroke-width="0.8"/></svg>
<span class="t" style="left:99px;top:720.40px;letter-spacing:0.109px;color:#222">client</span>
<svg style="left:72px;top:738.0px" width="6" height="8"><path d="M1 0.5L4.5 4L1 7.5" fill="none" stroke="#9a9a9a" stroke-width="1.3"/></svg>
<svg style="left:82px;top:736.5px" width="12" height="11" viewBox="0 0 12 11"><rect x="0.5" y="0.5" width="11" height="10" fill="#fbf1d4" stroke="#a88a50" stroke-width="0.9"/><rect x="0.5" y="0.5" width="11" height="2.5" fill="#9a7a40"/><path d="M0.5 5.5H11.5M0.5 8H11.5M4 3V10.5M8 3V10.5" stroke="#c8a860" stroke-width="0.8"/></svg>
<span class="t" style="left:99px;top:735.55px;letter-spacing:-0.979px;color:#222">DELETE_ME</span>
<svg style="left:72px;top:753.2px" width="6" height="8"><path d="M1 0.5L4.5 4L1 7.5" fill="none" stroke="#9a9a9a" stroke-width="1.3"/></svg>
<svg style="left:82px;top:751.7px" width="12" height="11" viewBox="0 0 12 11"><rect x="0.5" y="0.5" width="11" height="10" fill="#fbf1d4" stroke="#a88a50" stroke-width="0.9"/><rect x="0.5" y="0.5" width="11" height="2.5" fill="#9a7a40"/><path d="M0.5 5.5H11.5M0.5 8H11.5M4 3V10.5M8 3V10.5" stroke="#c8a860" stroke-width="0.8"/></svg>
<span class="t" style="left:99px;top:750.70px;letter-spacing:-0.441px;color:#222">DEMO</span>
<div style="left:82px;top:764px;width:12px;height:2px;background:#e8b050"></div>
<div style="left:0px;top:782px;width:1000px;height:21px;background:#f0f0f0"></div>
<span class="t" style="left:-0.5px;top:787.10px;letter-spacing:-0.099px;color:#222">Database type: Oracle_0.2.0.1.0 - 64bit Produc..., Database: ORCL,connected, Commit Mode: Auto</span>
<div style="left:440px;top:786px;width:1px;height:15px;background:#d8d8d8"></div>
<span class="t" style="left:446px;top:787.10px;letter-spacing:0.096px;color:#222">Writable</span>
<div style="left:553px;top:786px;width:1px;height:15px;background:#d8d8d8"></div>
<span class="t" style="left:559px;top:787.10px;letter-spacing:0.012px;color:#222">Insert</span>
<div style="left:659px;top:786px;width:1px;height:15px;background:#d8d8d8"></div>
<div style="left:365px;top:61px;width:635px;height:529px;background:#f0f0f0;border-left:1px solid #c8c8c8"></div>
<div style="left:365px;top:61px;width:635px;height:20px;background:#f0f0f0;border-bottom:1px solid #cfcfcf;border-top:1px solid #d8d8d8"></div>
<div style="left:458px;top:62px;width:1px;height:18px;background:#d4d4d4"></div>
<svg style="left:370px;top:64.5px" width="11" height="13" viewBox="0 0 11 13"><path d="M0.5 0.5H8L10.5 3V12.5H0.5Z" fill="#fbeeee" stroke="#c8a8a8" stroke-width="0.9"/><path d="M2 11.5L4.5 7L8.5 1.5L9 4.5L6 8.5L9.5 10Z" fill="#e02828"/></svg>
<span class="t" style="left:385px;top:65.00px;letter-spacing:-0.029px;color:#222">new_job.scl</span>
<div style="left:542px;top:62px;width:1px;height:18px;background:#d4d4d4"></div>
<svg style="left:464px;top:65.5px" width="12" height="12" viewBox="0 0 12 12"><circle cx="6" cy="3" r="2.2" fill="#a8d8a0" stroke="#4a8a40" stroke-width="0.8"/><circle cx="3" cy="9" r="2.2" fill="#a8c8f0" stroke="#3a6ab0" stroke-width="0.8"/><circle cx="9" cy="9" r="2.2" fill="#a8c8f0" stroke="#3a6ab0" stroke-width="0.8"/><path d="M6 5L3 7M6 5L9 7" stroke="#666" stroke-width="0.6"/></svg>
<span class="t" style="left:479px;top:65.00px;letter-spacing:-0.113px;color:#222">*new_job</span>
<div style="left:625px;top:62px;width:1px;height:18px;background:#d4d4d4"></div>
<svg style="left:547px;top:65.5px" width="12" height="12" viewBox="0 0 12 12"><circle cx="6" cy="3" r="2.2" fill="#a8d8a0" stroke="#4a8a40" stroke-width="0.8"/><circle cx="3" cy="9" r="2.2" fill="#a8c8f0" stroke="#3a6ab0" stroke-width="0.8"/><circle cx="9" cy="9" r="2.2" fill="#a8c8f0" stroke="#3a6ab0" stroke-width="0.8"/><path d="M6 5L3 7M6 5L9 7" stroke="#666" stroke-width="0.6"/></svg>
<span class="t" style="left:562px;top:65.00px;letter-spacing:-0.113px;color:#222">*new_job</span>
<div style="left:724px;top:62px;width:1px;height:18px;background:#d4d4d4"></div>
<svg style="left:630px;top:64.5px" width="11" height="13" viewBox="0 0 11 13"><path d="M0.5 0.5H8L10.5 3V12.5H0.5Z" fill="#fbeeee" stroke="#c8a8a8" stroke-width="0.9"/><path d="M2 11.5L4.5 7L8.5 1.5L9 4.5L6 8.5L9.5 10Z" fill="#e02828"/></svg>
<span class="t" style="left:645px;top:65.00px;letter-spacing:-0.013px;color:#222">new_jobu.scl</span>
<div style="left:811px;top:62px;width:1px;height:18px;background:#d4d4d4"></div>
<svg style="left:729px;top:64.5px" width="12" height="14" viewBox="0 0 12 14"><rect x="0.5" y="0.5" width="9.5" height="12.5" fill="#c4d8ee" stroke="#4f78a8" stroke-width="1"/><path d="M2.5 3H8M2.5 5H8M2.5 7H5.5" stroke="#ffffff" stroke-width="1"/><rect x="5.5" y="8.5" width="6" height="5" fill="#e6e0c8" stroke="#8a9098" stroke-width="0.8"/></svg>
<span class="t" style="left:745px;top:65.00px;letter-spacing:-0.175px;color:#222">*Script.sql</span>
<div style="left:812px;top:61px;width:92px;height:20px;background:#fbfbfb;border-left:1px solid #cfcfcf;border-right:1px solid #cfcfcf;border-top:1px solid #cfcfcf"></div>
<svg style="left:815px;top:64.5px" width="12" height="14" viewBox="0 0 12 14"><rect x="0.5" y="0.5" width="9.5" height="12.5" fill="#c4d8ee" stroke="#4f78a8" stroke-width="1"/><path d="M2.5 3H8M2.5 5H8M2.5 7H5.5" stroke="#ffffff" stroke-width="1"/><rect x="5.5" y="8.5" width="6" height="5" fill="#e6e0c8" stroke="#8a9098" stroke-width="0.8"/></svg>
<span class="t" style="left:831px;top:65.00px;letter-spacing:-0.349px;color:#222">CLAIMS.sql</span>
<svg style="left:888px;top:66px" width="10" height="10" viewBox="0 0 10 10"><path d="M1 1L9 9M9 1L1 9" stroke="#aaa" stroke-width="2.2"/><path d="M1 1L9 9M9 1L1 9" stroke="#fbfbfb" stroke-width="0.8"/></svg>
<div style="left:970px;top:65.5px;width:9px;height:4px;border:1px solid #707070"></div>
<div style="left:989px;top:65.5px;width:9.5px;height:9px;border:1px solid #707070;border-top:2px solid #707070"></div>
<div style="left:366px;top:81px;width:634px;height:509px;background:#f0f0f0"></div>
<div style="left:377px;top:92px;width:617px;height:37px;border:1px solid #dedede;border-radius:3px;background:#f0f0f0"></div>
<div style="left:383px;top:90px;width:83px;height:6px;background:#f0f0f0"></div>
<span class="t" style="left:386px;top:86.50px;letter-spacing:0.068px;color:#222">Connection profile</span>
<span class="t" style="left:383px;top:107.00px;letter-spacing:-0.166px;color:#222;text-decoration:none">Type:</span>
<div style="left:384px;top:119px;width:5px;height:1px;background:#222"></div>
<div style="left:411px;top:104px;width:198px;height:19px;background:#e6e6e6;border:1px solid #bcbcbc"></div>
<span class="t" style="left:415px;top:107.00px;letter-spacing:0.156px;color:#222">Oracle_11</span>
<svg style="left:596px;top:111px" width="8" height="5"><path d="M0.5 0.5L4 4L7.5 0.5" fill="none" stroke="#555" stroke-width="1"/></svg>
<span class="t" style="left:612px;top:107.00px;letter-spacing:-0.043px;color:#222">Name:</span>
<div style="left:612px;top:120px;width:7px;height:1px;background:#222"></div>
<div style="left:647px;top:104px;width:110px;height:19px;background:#e6e6e6;border:1px solid #bcbcbc"></div>
<span class="t" style="left:650px;top:107.00px;letter-spacing:-0.093px;color:#222">Overflow12c COSOF</span>
<svg style="left:744px;top:111px" width="8" height="5"><path d="M0.5 0.5L4 4L7.5 0.5" fill="none" stroke="#555" stroke-width="1"/></svg>
<span class="t" style="left:760px;top:107.00px;letter-spacing:0.026px;color:#222">Database:</span>
<div style="left:779px;top:120px;width:5.5px;height:1px;background:#222"></div>
<div style="left:807px;top:104px;width:40px;height:19px;background:#e6e6e6;border:1px solid #bcbcbc"></div>
<span class="t" style="left:810px;top:107.00px;letter-spacing:-0.572px;color:#222">ORC</span>
<svg style="left:834px;top:111px" width="8" height="5"><path d="M0.5 0.5L4 4L7.5 0.5" fill="none" stroke="#555" stroke-width="1"/></svg>
<span class="t" style="left:851px;top:107.00px;letter-spacing:-0.068px;color:#222;width:139px;overflow:hidden">Status:  Connected, Auto Comm</span>
<div style="left:376px;top:134px;width:604px;height:437px;background:#fff"></div>
<div style="left:376px;top:134px;width:17px;height:437px;background:#fdfdfd;border-right:1px solid #f2f2f2"></div>
<div style="left:980px;top:134px;width:14px;height:437px;background:#f0f0f0"></div>
<svg style="left:983px;top:139px" width="9" height="6"><path d="M1 5L4.5 1.5L8 5" fill="none" stroke="#555" stroke-width="1.5"/></svg>
<div style="left:980px;top:175px;width:13px;height:380px;background:#cdcdcd"></div>
<svg style="left:983px;top:559px" width="9" height="6"><path d="M1 1L4.5 4.5L8 1" fill="none" stroke="#555" stroke-width="1.5"/></svg>
<div style="left:376px;top:571px;width:604px;height:16px;background:#f0f0f0"></div>
<svg style="left:396px;top:574px" width="6" height="9"><path d="M5 1L1.5 4.5L5 8" fill="none" stroke="#bbb" stroke-width="1.5"/></svg>
<svg style="left:970px;top:573px" width="6" height="9"><path d="M1 1L4.5 4.5L1 8" fill="none" stroke="#bbb" stroke-width="1.5"/></svg>
<div style="left:394px;top:292.29999999999995px;width:586px;height:164.19px;background:#0078d7"></div>
<div style="left:394px;top:456.48999999999995px;width:35px;height:12.63px;background:#0078d7"></div>
<div style="left:367px;top:292.29999999999995px;width:10px;height:12px;background:#6aa8e0;border:1px solid #3a88d0"></div>
<span class="m" style="left:394.2px;top:142.74px"><span style="position:static;color:#5e8a84">Author: chaitalim</span></span>
<span class="m" style="left:394.2px;top:155.37px"><span style="position:static;color:#5e8a84">Date: 2022-03-23 16:24:03</span></span>
<span class="m" style="left:394.2px;top:168.00px"><span style="position:static;color:#5e8a84">*/</span></span>
<span class="m" style="left:394.2px;top:193.26px"><span style="position:static;color:#7f0055;font-weight:bold">ALTER TABLE </span><span style="position:static;color:#3f8a50">&quot;COSORT&quot;.&quot;CLAIMS&quot;</span><span style="position:static;"> </span><span style="position:static;color:#7f0055;font-weight:bold">DROP CONSTRAINT </span><span style="position:static;color:#3f8a50">&quot;pi&quot;</span><span style="position:static;">;</span></span>
<span class="m" style="left:394.2px;top:218.52px"><span style="position:static;color:#7f0055;font-weight:bold">ALTER TABLE </span><span style="position:static;color:#3f8a50">&quot;COSORT&quot;.&quot;CLAIMS&quot;</span><span style="position:static;"> </span><span style="position:static;color:#7f0055;font-weight:bold">DROP CONSTRAINT </span><span style="position:static;color:#3f8a50">&quot;cn&quot;</span><span style="position:static;">;</span></span>
<span class="m" style="left:394.2px;top:243.78px"><span style="position:static;color:#7f0055;font-weight:bold">DROP INDEX </span><span style="position:static;color:#3f8a50">&quot;COSORT&quot;.&quot;pn&quot;</span><span style="position:static;">;</span></span>
<span class="m" style="left:394.2px;top:269.04px"><span style="position:static;color:#7f0055;font-weight:bold">DROP TABLE </span><span style="position:static;color:#3f8a50">&quot;COSORT&quot;.&quot;CLAIMS&quot;</span><span style="position:static;">;</span></span>
<span class="m" style="left:394.2px;top:294.30px"><span style="position:static;color:#fff;font-weight:bold">CREATE TABLE </span><span style="position:static;color:#fff">&quot;COSORT&quot;.&quot;CLAIMS&quot; (</span></span>
<span class="m" style="left:394.2px;top:306.93px"><span style="position:static;color:#fff">        &quot;CLAIM_NUMBER&quot;</span><span style="position:static;color:#fff"> VARCHAR2(50),</span></span>
<span class="m" style="left:394.2px;top:319.56px"><span style="position:static;color:#fff">        &quot;PROVIDER_ID&quot;</span><span style="position:static;color:#fff"> VARCHAR2(50),</span></span>
<span class="m" style="left:394.2px;top:332.19px"><span style="position:static;color:#fff">        &quot;AGREEMENT_NUMBER&quot;</span><span style="position:static;color:#fff"> VARCHAR2(50),</span></span>
<span class="m" style="left:394.2px;top:344.82px"><span style="position:static;color:#fff">        &quot;PATIENT_FIRST_NAME&quot;</span><span style="position:static;color:#fff"> VARCHAR2(50),</span></span>
<span class="m" style="left:394.2px;top:357.45px"><span style="position:static;color:#fff">        &quot;PATIENT_LAST_NAME&quot;</span><span style="position:static;color:#fff"> VARCHAR2(50),</span></span>
<span class="m" style="left:394.2px;top:370.08px"><span style="position:static;color:#fff">        &quot;AGE&quot;</span><span style="position:static;color:#fff"> VARCHAR2(50),</span></span>
<span class="m" style="left:394.2px;top:382.71px"><span style="position:static;color:#fff">        &quot;MEMBER_FULL_NAME&quot;</span><span style="position:static;color:#fff"> VARCHAR2(50),</span></span>
<span class="m" style="left:394.2px;top:395.34px"><span style="position:static;color:#fff">        &quot;PATIENT_ADDRESS&quot;</span><span style="position:static;color:#fff"> VARCHAR2(50),</span></span>
<span class="m" style="left:394.2px;top:407.97px"><span style="position:static;color:#fff">        &quot;DIAGNOSIS_CODE&quot;</span><span style="position:static;color:#fff"> VARCHAR2(50),</span></span>
<span class="m" style="left:394.2px;top:420.60px"><span style="position:static;color:#fff">        &quot;PROCEDURE_CODE&quot;</span><span style="position:static;color:#fff"> VARCHAR2(50),</span></span>
<span class="m" style="left:394.2px;top:433.23px"><span style="position:static;color:#fff">        &quot;DATE_OF_SERVICE&quot;</span><span style="position:static;color:#fff"> VARCHAR2(50),</span></span>
<span class="m" style="left:394.2px;top:445.86px"><span style="position:static;color:#fff">        &quot;DR_NOTES&quot;</span><span style="position:static;color:#fff"> VARCHAR2(50)</span></span>
<span class="m" style="left:394.2px;top:458.49px"><span style="position:static;color:#fff">    );</span></span>
<span class="m" style="left:394.2px;top:483.75px"><span style="position:static;color:#7f0055;font-weight:bold">CREATE INDEX </span><span style="position:static;color:#3f8a50">&quot;COSORT&quot;.&quot;pn&quot;</span><span style="position:static;"> </span><span style="position:static;color:#7f0055;font-weight:bold">ON </span><span style="position:static;color:#3f8a50">&quot;COSORT&quot;.&quot;CLAIMS&quot;</span></span>
<span class="m" style="left:394.2px;top:509.01px"><span style="position:static;color:#7f0055;font-weight:bold">ALTER TABLE </span><span style="position:static;color:#3f8a50">&quot;COSORT&quot;.&quot;CLAIMS&quot;</span><span style="position:static;"> </span><span style="position:static;color:#7f0055;font-weight:bold">ADD CONSTRAINT</span></span>
<span class="m" style="left:394.2px;top:534.27px"><span style="position:static;color:#7f0055;font-weight:bold">ALTER TABLE </span><span style="position:static;color:#3f8a50">&quot;COSORT&quot;.&quot;CLAIMS&quot;</span><span style="position:static;"> </span><span style="position:static;color:#7f0055;font-weight:bold">ADD CONSTRAINT</span></span>
<div style="left:365px;top:590px;width:635px;height:192px;background:#f0f0f0;border-left:1px solid #c8c8c8"></div>
<div style="left:365px;top:589.5px;width:635px;height:1px;background:#c4c4c4"></div>
<div style="left:365px;top:595px;width:635px;height:20px;background:#f0f0f0;border-top:1px solid #cfcfcf;border-bottom:1px solid #cfcfcf"></div>
<div style="left:424px;top:596px;width:1px;height:18px;background:#d4d4d4"></div>
<span class="t" style="left:385px;top:599.50px;letter-spacing:0.098px;color:#222">Console</span>
<div style="left:489px;top:596px;width:1px;height:18px;background:#d4d4d4"></div>
<span class="t" style="left:445px;top:599.50px;letter-spacing:-0.041px;color:#222">Problems</span>
<div style="left:558px;top:596px;width:1px;height:18px;background:#d4d4d4"></div>
<span class="t" style="left:510px;top:599.50px;letter-spacing:-0.023px;color:#222">Properties</span>
<div style="left:625px;top:596px;width:1px;height:18px;background:#d4d4d4"></div>
<span class="t" style="left:579px;top:599.50px;letter-spacing:-0.027px;color:#222">Scheduler</span>
<div style="left:699px;top:596px;width:1px;height:18px;background:#d4d4d4"></div>
<span class="t" style="left:645px;top:599.50px;letter-spacing:-0.124px;color:#222">Errors</span>
<svg style="left:369px;top:598px" width="13" height="13" viewBox="0 0 13 13"><rect x="0.8" y="0.8" width="11.4" height="8.4" rx="1.5" fill="#cfe0f2" stroke="#3c5a80" stroke-width="1.5"/><path d="M3.5 4H6.5" stroke="#6a8ab0" stroke-width="0.8"/><path d="M4 12H9M6.5 9.5V12" stroke="#3c5a80" stroke-width="1.3"/></svg>
<svg style="left:428px;top:597px" width="13" height="15" viewBox="0 0 13 15"><rect x="0.5" y="0.5" width="12" height="14" fill="#f4f4f4" stroke="#9a9a9a"/><circle cx="5" cy="4.5" r="2.2" fill="#c84040"/><path d="M5 7V10" stroke="#c84040" stroke-width="1.5"/><path d="M1.5 12.5H11.5" stroke="#7aa050" stroke-width="2"/><path d="M9 3V11" stroke="#6a9ad8" stroke-width="1.5"/></svg>
<svg style="left:493px;top:598px" width="13" height="13" viewBox="0 0 13 13"><rect x="0.5" y="0.5" width="12" height="12" fill="#f8f8f8" stroke="#8090a8"/><path d="M0.5 3.5H12.5" stroke="#8090a8" stroke-width="1.5"/><path d="M4.5 3.5V12.5" stroke="#a8b4c8"/></svg>
<svg style="left:562px;top:597px" width="15" height="15" viewBox="0 0 15 15"><rect x="0.5" y="1" width="11" height="10" fill="#fff" stroke="#b0b0b0"/><rect x="0.5" y="0.5" width="11" height="2.5" fill="#40b040"/><circle cx="10.5" cy="10.5" r="3.5" fill="#f0d890" stroke="#a07830" stroke-width="0.9"/><path d="M10.5 8.5V10.5H12" stroke="#705020" stroke-width="0.8" fill="none"/></svg>
<svg style="left:629px;top:597px" width="14" height="15" viewBox="0 0 14 15"><rect x="5" y="4" width="8" height="10.5" fill="#fff" stroke="#a0a0a0" stroke-width="0.8"/><circle cx="5.5" cy="5.5" r="5" fill="#d84a4a" stroke="#a02020" stroke-width="0.8"/><path d="M3.5 3.5L7.5 7.5M7.5 3.5L3.5 7.5" stroke="#fff" stroke-width="1.4"/></svg>
<div style="left:970px;top:600px;width:9px;height:4px;border:1px solid #707070"></div>
<div style="left:989px;top:600px;width:9.5px;height:9px;border:1px solid #707070;border-top:2px solid #707070"></div>
<svg style="left:965px;top:619px" width="16" height="14" viewBox="0 0 16 14"><path d="M1 4H8M1 10H8M5 1V13" stroke="#4a5a70" stroke-width="1.2"/><path d="M9 2H14L12 12H8Z" fill="#f0c860" stroke="#b08a30" stroke-width="0.8"/></svg>
<svg style="left:992px;top:620px" width="5" height="14" viewBox="0 0 5 14"><circle cx="2.5" cy="2" r="1.6" fill="none" stroke="#777"/><circle cx="2.5" cy="7" r="1.6" fill="none" stroke="#777"/><circle cx="2.5" cy="12" r="1.6" fill="none" stroke="#777"/></svg>
<div style="left:367px;top:635px;width:81px;height:18px;background:#fff;border:1px solid #b8b8b8"></div>
<div style="left:367px;top:653px;width:82px;height:112px;background:#fff"></div>
<span class="t" style="left:372px;top:656.50px;letter-spacing:-0.119px;color:#222">Status</span>
<div style="left:435px;top:654px;width:1px;height:19px;background:#e4e4e4"></div>
<span class="t" style="left:440px;top:656.50px;letter-spacing:-0.148px;color:#222">O</span>
<div style="left:367px;top:674px;width:82px;height:15px;background:#d9d9d9"></div>
<svg style="left:384px;top:676px" width="12" height="12" viewBox="0 0 12 12"><path d="M1 6.5L4.5 10.5L11 1" fill="none" stroke="#2040c0" stroke-width="1.6"/></svg>
<span class="t" style="left:401px;top:675.00px;letter-spacing:-0.096px;color:#222">Succee</span>
<div style="left:435px;top:674px;width:1px;height:15px;background:#c8c8c8"></div>
<span class="t" style="left:437px;top:675.00px;letter-spacing:-0.583px;color:#222">Sa</span>
<div style="left:367px;top:765px;width:82px;height:17px;background:#f0f0f0"></div>
<svg style="left:370px;top:769px" width="6" height="9"><path d="M5 1L1.5 4.5L5 8" fill="none" stroke="#555" stroke-width="1.5"/></svg>
<div style="left:382px;top:768px;width:15px;height:12px;background:#cdcdcd"></div>
<svg style="left:437px;top:769px" width="6" height="9"><path d="M1 1L4.5 4.5L1 8" fill="none" stroke="#555" stroke-width="1.5"/></svg>
<div style="left:448px;top:635px;width:2px;height:147px;background:#f0f0f0"></div>
<span class="t" style="left:453px;top:637.50px;letter-spacing:-0.119px;color:#222">Status</span>
<div style="left:484px;top:636px;width:39px;height:18px;background:#fafafa;border:1px solid #c8c8c8;border-bottom:none"></div>
<span class="t" style="left:487px;top:637.50px;letter-spacing:-0.040px;color:#222">Result1</span>
<div style="left:450px;top:653px;width:538px;height:112px;background:#fff;border-top:1px solid #c8c8c8"></div>
<div style="left:450px;top:654px;width:538px;height:19px;background:#fff"></div>
<span class="t" style="left:452px;top:656.50px;letter-spacing:-0.707px;color:#222;clip-path:inset(0 0 0 4px)">MEMBER_FULL_NAME</span>
<div style="left:555px;top:654px;width:1px;height:19px;background:#e4e4e4"></div>
<span class="t" style="left:560px;top:656.50px;letter-spacing:-0.717px;color:#222">PATIENT_ADDRESS</span>
<div style="left:651px;top:654px;width:1px;height:19px;background:#e4e4e4"></div>
<span class="t" style="left:655px;top:656.50px;letter-spacing:-0.137px;color:#222">D</span>
<span class="t" style="left:958px;top:656.50px;letter-spacing:-0.827px;color:#222;clip-path:inset(0 0 0 2px)">NOTES</span>
<div style="left:450px;top:674px;width:538px;height:15px;background:#d9d9d9"></div>
<span class="t" style="left:452px;top:676.00px;letter-spacing:0.043px;color:#222">urner, christopher v</span>
<span class="t" style="left:560px;top:676.00px;letter-spacing:-0.692px;color:#222">&lt;LONG&gt;</span>
<span class="t" style="left:655px;top:676.00px;letter-spacing:-0.586px;color:#222">I:</span>
<div style="left:450px;top:689.5px;width:538px;height:1px;background:#ececec"></div>
<span class="t" style="left:452px;top:692.00px;letter-spacing:0.043px;color:#222">urner, christopher v</span>
<span class="t" style="left:560px;top:692.00px;letter-spacing:-0.692px;color:#222">&lt;LONG&gt;</span>
<span class="t" style="left:655px;top:692.00px;letter-spacing:0.140px;color:#222">c</span>
<div style="left:450px;top:705.5px;width:538px;height:1px;background:#ececec"></div>
<span class="t" style="left:452px;top:708.00px;letter-spacing:0.026px;color:#222">ammerding, robert m</span>
<span class="t" style="left:560px;top:708.00px;letter-spacing:-0.692px;color:#222">&lt;LONG&gt;</span>
<span class="t" style="left:655px;top:708.00px;letter-spacing:0.156px;color:#222">p</span>
<div style="left:450px;top:721.5px;width:538px;height:1px;background:#ececec"></div>
<span class="t" style="left:452px;top:724.00px;letter-spacing:0.026px;color:#222">ammerding, robert m</span>
<span class="t" style="left:560px;top:724.00px;letter-spacing:-0.692px;color:#222">&lt;LONG&gt;</span>
<span class="t" style="left:655px;top:724.00px;letter-spacing:0.140px;color:#222">v</span>
<div style="left:450px;top:737.5px;width:538px;height:1px;background:#ececec"></div>
<span class="t" style="left:452px;top:740.00px;letter-spacing:-0.101px;color:#222">utt, roy a</span>
<span class="t" style="left:560px;top:740.00px;letter-spacing:-0.692px;color:#222">&lt;LONG&gt;</span>
<span class="t" style="left:655px;top:740.00px;letter-spacing:-0.137px;color:#222">H</span>
<div style="left:555px;top:674px;width:1px;height:76px;background:#ececec"></div>
<div style="left:651px;top:674px;width:1px;height:76px;background:#ececec"></div>
<div style="left:450px;top:748px;width:538px;height:2px;background:#fff"></div>
<div style="left:450px;top:749px;width:538px;height:16px;background:#f0f0f0"></div>
<svg style="left:455px;top:753px" width="6" height="9"><path d="M5 1L1.5 4.5L5 8" fill="none" stroke="#555" stroke-width="1.5"/></svg>
<div style="left:960px;top:751px;width:12px;height:13px;background:#cdcdcd"></div>
<svg style="left:978px;top:753px" width="6" height="9"><path d="M1 1L4.5 4.5L1 8" fill="none" stroke="#555" stroke-width="1.5"/></svg>
<div style="left:988px;top:654px;width:12px;height:95px;background:#f0f0f0"></div>
<svg style="left:990px;top:658px" width="9" height="6"><path d="M1 5L4.5 1.5L8 5" fill="none" stroke="#555" stroke-width="1.5"/></svg>
<div style="left:988px;top:668px;width:11px;height:14px;background:#cdcdcd"></div>
<svg style="left:990px;top:738px" width="9" height="6"><path d="M1 1L4.5 4.5L8 1" fill="none" stroke="#555" stroke-width="1.5"/></svg>
<span class="t" style="left:452px;top:767.50px;letter-spacing:0.061px;color:#222">Total 42 records shown</span>
<svg style="left:985px;top:786px" width="15" height="15" viewBox="0 0 15 15"><rect x="0" y="2" width="11" height="8" fill="#9ac890" stroke="#5a8a50" stroke-width="0.8"/><circle cx="11" cy="11" r="3.5" fill="#e03030"/></svg>
<div style="left:658px;top:360px;width:302px;height:443px;background:#f2f2f2;border:1px solid #cccccc;border-bottom:none"></div>
<div style="left:659px;top:361px;width:300px;height:1px;background:#fff"></div>
<span class="t" style="left:688px;top:366.50px;letter-spacing:0.082px;color:#9a9a9a">Undo</span>
<span class="t" style="right:58px;top:366.50px;letter-spacing:-0.087px;color:#9a9a9a">Ctrl+Z</span>
<svg style="left:665px;top:367.0px" width="14" height="12" viewBox="0 0 14 12"><path d="M2 6L6 2V4.5H9Q13 4.5 12 9L9 11Q11 6.5 8 7H6V9.5Z" fill="none" stroke="#c8c8c8" stroke-width="1.2"/></svg>
<span class="t" style="left:688px;top:384.50px;letter-spacing:-0.214px;color:#9a9a9a">Revert File</span>
<div style="left:685px;top:404px;width:273px;height:1px;background:#d7d7d7"></div>
<span class="t" style="left:688px;top:409.50px;letter-spacing:0.032px;color:#1a1a1a">Cut</span>
<span class="t" style="right:58px;top:409.50px;letter-spacing:0.122px;color:#1a1a1a">Ctrl+X</span>
<svg style="left:665px;top:409.0px" width="13" height="13" viewBox="0 0 13 13"><circle cx="3" cy="6" r="2" fill="none" stroke="#4a6aa0" stroke-width="1.2"/><circle cx="5" cy="11" r="2" fill="none" stroke="#4a6aa0" stroke-width="1.2"/><path d="M4.5 7L12 1M6 9.5L10 1" stroke="#555" stroke-width="1.1"/></svg>
<span class="t" style="left:688px;top:428.00px;letter-spacing:0.079px;color:#1a1a1a">Copy</span>
<span class="t" style="right:58px;top:428.00px;letter-spacing:0.091px;color:#1a1a1a">Ctrl+C</span>
<svg style="left:665px;top:427.5px" width="13" height="14" viewBox="0 0 13 14"><rect x="0.5" y="0.5" width="8" height="10" fill="#e8eef6" stroke="#8a9ab8"/><rect x="4" y="3.5" width="8.5" height="10" fill="#f4f7fb" stroke="#8a9ab8"/><path d="M6 6.5H10.5M6 8.5H10.5M6 10.5H10.5" stroke="#9aaac0" stroke-width="0.8"/></svg>
<span class="t" style="left:688px;top:446.50px;letter-spacing:-0.158px;color:#1a1a1a">Paste</span>
<span class="t" style="right:58px;top:446.50px;letter-spacing:0.122px;color:#1a1a1a">Ctrl+V</span>
<svg style="left:665px;top:446.0px" width="13" height="14" viewBox="0 0 13 14"><rect x="0.5" y="2" width="10" height="11.5" fill="#e8c070" stroke="#a88040"/><rect x="3" y="0.5" width="5" height="3" fill="#bbb" stroke="#777" stroke-width="0.8"/><rect x="5" y="5.5" width="7.5" height="8" fill="#fff" stroke="#8a9ab8" stroke-width="0.8"/></svg>
<div style="left:685px;top:466px;width:273px;height:1px;background:#d7d7d7"></div>
<span class="t" style="left:688px;top:471.00px;letter-spacing:0.060px;color:#1a1a1a">Toggle Comment</span>
<span class="t" style="right:58px;top:471.00px;letter-spacing:0.011px;color:#1a1a1a">Ctrl+/</span>
<div style="left:685px;top:490px;width:273px;height:1px;background:#d7d7d7"></div>
<div style="left:661px;top:493px;width:296px;height:18px;background:#91c9f7"></div>
<span class="t" style="left:688px;top:495.50px;letter-spacing:-0.036px;color:#1a1a1a">Execute All</span>
<span class="t" style="right:58px;top:495.50px;letter-spacing:0.151px;color:#1a1a1a">Ctrl+Alt+X</span>
<span class="t" style="left:688px;top:514.00px;letter-spacing:-0.228px;color:#1a1a1a">Execute Se</span>
<span class="t" style="right:58px;top:514.00px;letter-spacing:0.165px;color:#1a1a1a">Alt+X</span>
<span class="t" style="left:688px;top:532.50px;letter-spacing:-0.076px;color:#1a1a1a">Execute Selected Text As One Statement</span>
<span class="t" style="right:58px;top:532.50px;letter-spacing:0.128px;color:#1a1a1a">Alt+C</span>
<span class="t" style="left:688px;top:551.00px;letter-spacing:-0.035px;color:#9a9a9a">Execute Current Text</span>
<span class="t" style="right:58px;top:551.00px;letter-spacing:-0.109px;color:#9a9a9a">Alt+S</span>
<div style="left:685px;top:570px;width:273px;height:1px;background:#d7d7d7"></div>
<span class="t" style="left:688px;top:575.50px;letter-spacing:-0.137px;color:#1a1a1a">Save as Template...</span>
<div style="left:685px;top:594px;width:273px;height:1px;background:#d7d7d7"></div>
<span class="t" style="left:688px;top:600.00px;letter-spacing:-0.203px;color:#1a1a1a">Edit in SQL Query Builder...</span>
<span class="t" style="right:58px;top:600.00px;letter-spacing:0.126px;color:#1a1a1a">Alt+Q</span>
<div style="left:685px;top:619px;width:273px;height:1px;background:#d7d7d7"></div>
<span class="t" style="left:688px;top:624.50px;letter-spacing:-0.167px;color:#1a1a1a">Run As</span>
<svg style="left:945px;top:627.0px" width="5" height="8"><path d="M1 0.5L4.3 4L1 7.5" fill="none" stroke="#555" stroke-width="1.1"/></svg>
<svg style="left:665px;top:624.0px" width="14" height="14" viewBox="0 0 14 14"><circle cx="7" cy="7" r="6.5" fill="#2f9a3a"/><path d="M5 3.5L10.5 7L5 10.5Z" fill="#fff"/></svg>
<span class="t" style="left:688px;top:643.00px;letter-spacing:0.075px;color:#1a1a1a">Debug As</span>
<svg style="left:945px;top:645.5px" width="5" height="8"><path d="M1 0.5L4.3 4L1 7.5" fill="none" stroke="#555" stroke-width="1.1"/></svg>
<svg style="left:665px;top:642.5px" width="14" height="14" viewBox="0 0 14 14"><circle cx="7" cy="7" r="4" fill="#5ab080"/><path d="M7 0V14M0 7H14M2 2L12 12M12 2L2 12" stroke="#3a8a60" stroke-width="1"/><circle cx="7" cy="7" r="2.5" fill="#8ad0a0"/></svg>
<span class="t" style="left:688px;top:661.50px;letter-spacing:-0.060px;color:#1a1a1a">Profile As</span>
<svg style="left:945px;top:664.0px" width="5" height="8"><path d="M1 0.5L4.3 4L1 7.5" fill="none" stroke="#555" stroke-width="1.1"/></svg>
<span class="t" style="left:688px;top:680.00px;letter-spacing:0.111px;color:#1a1a1a">Team</span>
<svg style="left:945px;top:682.5px" width="5" height="8"><path d="M1 0.5L4.3 4L1 7.5" fill="none" stroke="#555" stroke-width="1.1"/></svg>
<span class="t" style="left:688px;top:698.50px;letter-spacing:0.026px;color:#1a1a1a">Compare With</span>
<svg style="left:945px;top:701.0px" width="5" height="8"><path d="M1 0.5L4.3 4L1 7.5" fill="none" stroke="#555" stroke-width="1.1"/></svg>
<span class="t" style="left:688px;top:717.00px;letter-spacing:-0.093px;color:#1a1a1a">Replace With</span>
<svg style="left:945px;top:719.5px" width="5" height="8"><path d="M1 0.5L4.3 4L1 7.5" fill="none" stroke="#555" stroke-width="1.1"/></svg>
<div style="left:685px;top:736px;width:273px;height:1px;background:#d7d7d7"></div>
<span class="t" style="left:688px;top:741.50px;letter-spacing:0.202px;color:#1a1a1a">Validate</span>
<svg style="left:665px;top:741.0px" width="13" height="13" viewBox="0 0 13 13"><rect x="0.5" y="0.5" width="12" height="12" fill="#fff" stroke="#9ab4d8"/><path d="M2.5 6.5L5.5 9.5L10.5 3" fill="none" stroke="#3a6ab8" stroke-width="1.4"/></svg>
<div style="left:685px;top:760px;width:273px;height:1px;background:#d7d7d7"></div>
<span class="t" style="left:688px;top:765.50px;letter-spacing:-0.133px;color:#1a1a1a">Preferences...</span>
<div style="left:685px;top:784px;width:273px;height:1px;background:#d7d7d7"></div>
<span class="t" style="left:688px;top:790.50px;letter-spacing:-0.075px;color:#1a1a1a">Set Connection Info</span>
<svg style="left:664px;top:790.0px" width="16" height="14" viewBox="0 0 16 14"><rect x="1" y="0.5" width="4" height="5" fill="#fff" stroke="#555"/><path d="M3 5.5V11H9" stroke="#222" stroke-width="1.5"/><rect x="9" y="8" width="6" height="5" fill="#ddd" stroke="#555"/></svg>
<div style="left:735px;top:511px;width:131px;height:18px;background:#fff;border:1px solid #767676;box-shadow:1px 1px 1px rgba(0,0,0,0.15)"></div>
<span class="t" style="left:740px;top:513.50px;letter-spacing:-0.151px;color:#555">Execute All SQL Statements</span>
<svg style="left:734px;top:491px" width="12" height="19" viewBox="0 0 12 19"><path d="M0.5 0.5V15.5L4 12.2L6.6 18L8.6 17.1L6.1 11.4H10.8Z" fill="#fff" stroke="#000" stroke-width="1"/></svg></body></html>
